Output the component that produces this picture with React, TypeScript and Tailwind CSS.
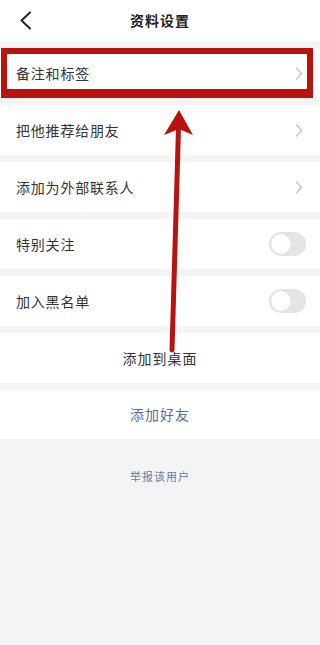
const font = { fontFamily: '"Noto Sans CJK SC", "Noto Sans", sans-serif' }

function Chevron() {
  return (
    <svg width="8" height="13" viewBox="0 0 8 13" className="shrink-0">
      <polyline points="1.5,1 6.5,6.5 1.5,12" fill="none" stroke="#c4c4c6" strokeWidth="1.3" strokeLinecap="round" strokeLinejoin="round" />
    </svg>
  )
}

function LinkRow({ label }: { label: string }) {
  return (
    <div className="h-[50px] bg-white flex items-center justify-between pl-4 pr-[17px]">
      <span className="text-[14px] tracking-[0.8px] text-[#333]">{label}</span>
      <Chevron />
    </div>
  )
}

function SwitchRow({ label }: { label: string }) {
  return (
    <div className="h-[50px] bg-white flex items-center justify-between pl-4 pr-[14px]">
      <span className="text-[14px] tracking-[0.8px] text-[#333]">{label}</span>
      <div className="w-[37px] h-[24px] rounded-full bg-[#e5e5e7] p-[2px] flex items-center">
        <div className="w-[20px] h-[20px] rounded-full bg-white shadow-[0_0_1px_rgba(0,0,0,0.15)]" />
      </div>
    </div>
  )
}

export default function App() {
  return (
    <div className="relative w-[320px] h-[645px] bg-[#f3f4f6] overflow-hidden" style={font}>
      {/* Header */}
      <div className="h-[41px] bg-white flex items-center relative">
        <svg className="absolute left-[19px] top-[11px]" width="13" height="19" viewBox="0 0 13 19">
          <polyline points="11,1.5 2.5,9.5 11,17.5" fill="none" stroke="#222" strokeWidth="2" strokeLinecap="round" strokeLinejoin="round" />
        </svg>
        <div className="w-full text-center text-[14px] font-bold tracking-[1px] text-[#222]">资料设置</div>
      </div>

      <div className="flex flex-col gap-[7px] mt-[7px]">
        <LinkRow label="备注和标签" />
        <LinkRow label="把他推荐给朋友" />
        <LinkRow label="添加为外部联系人" />
        <SwitchRow label="特别关注" />
        <SwitchRow label="加入黑名单" />
        <div className="h-[50px] bg-white flex items-center justify-center">
          <span className="text-[14px] tracking-[1px] text-[#333]">添加到桌面</span>
        </div>
        <div className="h-[49px] bg-white flex items-center justify-center">
          <span className="text-[14px] tracking-[1px] text-[#5d6e94]">添加好友</span>
        </div>
      </div>

      <div className="mt-[29px] text-center text-[11px] tracking-[1px] text-[#6c7ba0]">举报该用户</div>

      {/* Annotation overlay */}
      <div className="absolute left-[1px] top-[48px] w-[312px] h-[50px] border-[6px] border-b-[9px] border-[#b9120f] pointer-events-none" />
      <svg className="absolute left-0 top-0 pointer-events-none" width="320" height="645" viewBox="0 0 320 645">
        <line x1="172" y1="350" x2="178.5" y2="128" stroke="#b9120f" strokeWidth="5" strokeLinecap="round" />
        <polygon points="179,110 193,135 179,129 164,135" fill="#b9120f" />
      </svg>
    </div>
  )
}
